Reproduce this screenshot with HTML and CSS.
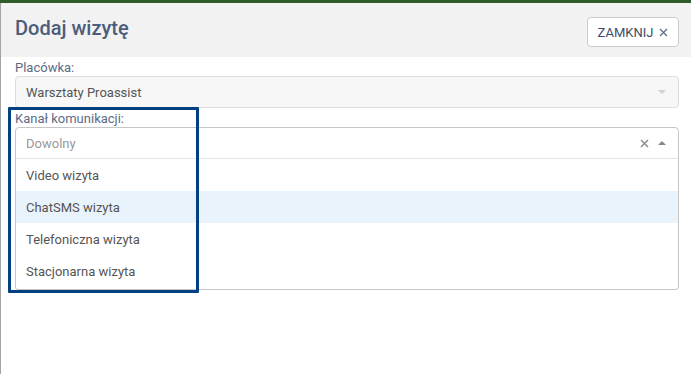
FILE: index.html
```html
<!DOCTYPE html>
<html lang="pl">
<head>
<meta charset="utf-8">
<link rel="stylesheet" href="styles.css">
</head>
<body>
<div class="topbar"></div>
<div class="modal">
  <div class="header">
    <h1 class="title">Dodaj wizytę</h1>
    <button class="close">ZAMKNIJ <svg class="x" width="9" height="9" viewBox="0 0 9 9"><path d="M1 1L8 8M8 1L1 8" stroke="#5a6a88" stroke-width="1.2" fill="none"/></svg></button>
  </div>
  <div class="form">
    <label class="label">Placówka:</label>
    <div class="select disabled">
      <span class="value">Warsztaty Proassist</span>
      <span class="arrow down"></span>
    </div>
    <label class="label">Kanał komunikacji:</label>
    <div class="select open">
      <div class="search">
        <span class="placeholder">Dowolny</span>
        <span class="icons"><svg class="clear" width="9" height="9" viewBox="0 0 9 9"><path d="M1 1L8 8M8 1L1 8" stroke="#888" stroke-width="1.4" fill="none"/></svg><span class="arrow up"></span></span>
      </div>
      <ul class="options">
        <li class="option">Video wizyta</li>
        <li class="option active">ChatSMS wizyta</li>
        <li class="option">Telefoniczna wizyta</li>
        <li class="option">Stacjonarna wizyta</li>
      </ul>
    </div>
  </div>
  <div class="highlight"></div>
</div>
</body>
</html>
```
FILE: styles.css
```css
* { box-sizing: border-box; }
html, body { margin: 0; padding: 0; background: #fff; }
body { font-family: Roboto, "Liberation Sans", sans-serif; height: 374px; overflow: hidden; }
.topbar { height: 3px; background: #2e5d2b; }
.modal { position: relative; border-left: 1px solid #a4a4a4; height: 371px; }
.header {
  height: 54px; background: #f2f2f2;
  display: flex; align-items: center; justify-content: space-between;
  padding: 0 12px 0 14px;
}
.title { margin: 0; font-size: 20px; font-weight: 500; color: #4d5c7a; margin-top: -4px; }
.close {
  font-family: Roboto, "Liberation Sans", sans-serif;
  height: 30px; width: 92px; margin-top: 4px;
  background: #fff; border: 1px solid #c9ccd2; border-radius: 4px;
  font-size: 13px; color: #3e4c68; padding: 0; letter-spacing: 0;
  display: flex; align-items: center; justify-content: center;
}
.close .x { margin-left: 6px; }
.form { padding: 0 12px 0 14px; }
.label { display: block; height: 19px; line-height: 21px; font-size: 13px; color: #5c6b86; }
.select { border: 1px solid #d4d4d4; border-radius: 4px; font-size: 13px; color: #555; }
.select.disabled {
  height: 32px; background: #f7f7f7; border-color: #dcdcdc;
  display: flex; align-items: center; justify-content: space-between; padding: 0 10px 0 10px;
}
.value { color: #555; }
.arrow { width: 0; height: 0; border-left: 4px solid transparent; border-right: 4px solid transparent; }
.arrow.down { border-top: 4px solid #d0d0d0; margin-right: 2px; }
.arrow.up { border-bottom: 4px solid #888; margin-left: 9px; }
.select.open { border-color: #c6c6c6; border-radius: 4px 4px 3px 3px; }
.search {
  height: 31px; border-bottom: 1px solid #e6e6e6;
  display: flex; align-items: center; justify-content: space-between; padding: 0 10px;
}
.placeholder { color: #999; }
.icons { display: flex; align-items: center; margin-right: 2px; }
.clear { display: block; }
.options { list-style: none; margin: 0; padding: 0 0 2px; }
.option { height: 32px; line-height: 33px; padding-left: 10px; color: #555; }
.option.active { background: #e9f3fc; }
.highlight {
  position: absolute; left: 7px; top: 104px; width: 191px; height: 186px;
  border: 3px solid #03407f; border-radius: 1px;
}
```
